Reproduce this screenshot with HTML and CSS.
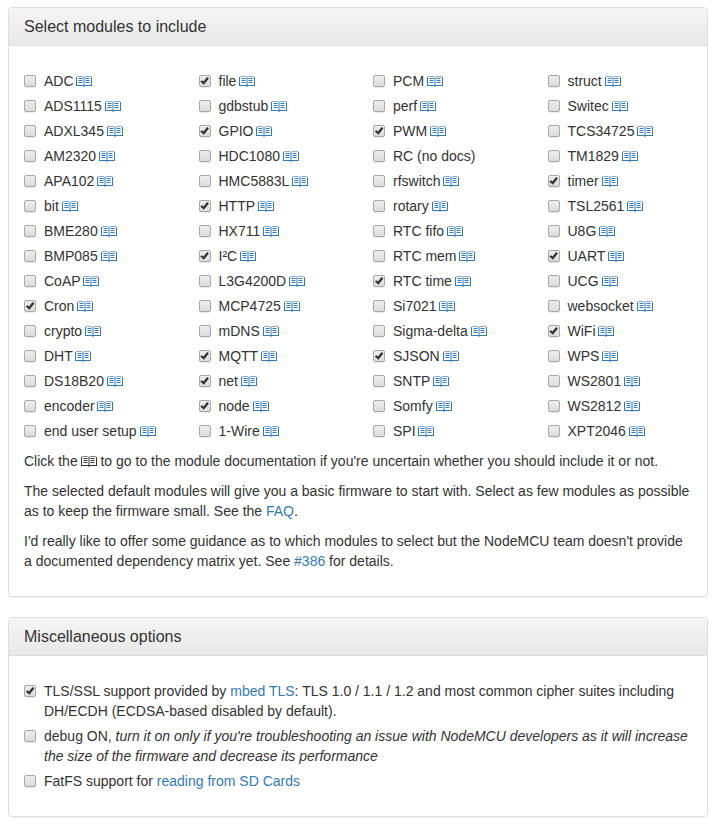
FILE: index.html
```html
<!DOCTYPE html>
<html lang="en">
<head>
<meta charset="utf-8">
<title>NodeMCU custom builds</title>
<link rel="stylesheet" href="styles.css">
</head>
<body>
<svg class="sprite" aria-hidden="true">
  <symbol id="book" viewBox="0 0 16 12">
    <g fill="currentColor">
      <path opacity=".6" d="M1 0H6.500L8 1L9.500 0H15V1H9.500L8 2L6.500 1H1Z"/>
      <path d="M0 1H1V9H7.500V1.500H8.500V9H15V1H16V10H9L8 11L7 10H0Z"/>
      <path d="M2.500 2H6.500V3H2.500ZM2.500 4H6.500V5H2.500ZM2.500 6H6.500V7H2.500ZM9.500 2H13.500V3H9.500ZM9.500 4H13.500V5H9.500ZM9.500 6H13.500V7H9.500Z"/>
    </g>
  </symbol>
</svg>
<section class="panel">
  <h3 class="panel-heading">Select modules to include</h3>
  <div class="panel-body">
    <div class="modules">
      <div class="column">
        <label class="option"><input type="checkbox">ADC <a href="#adc"><svg class="book"><use href="#book"/></svg></a></label>
        <label class="option"><input type="checkbox">ADS1115 <a href="#ads1115"><svg class="book"><use href="#book"/></svg></a></label>
        <label class="option"><input type="checkbox">ADXL345 <a href="#adxl345"><svg class="book"><use href="#book"/></svg></a></label>
        <label class="option"><input type="checkbox">AM2320 <a href="#am2320"><svg class="book"><use href="#book"/></svg></a></label>
        <label class="option"><input type="checkbox">APA102 <a href="#apa102"><svg class="book"><use href="#book"/></svg></a></label>
        <label class="option"><input type="checkbox">bit <a href="#bit"><svg class="book"><use href="#book"/></svg></a></label>
        <label class="option"><input type="checkbox">BME280 <a href="#bme280"><svg class="book"><use href="#book"/></svg></a></label>
        <label class="option"><input type="checkbox">BMP085 <a href="#bmp085"><svg class="book"><use href="#book"/></svg></a></label>
        <label class="option"><input type="checkbox">CoAP <a href="#coap"><svg class="book"><use href="#book"/></svg></a></label>
        <label class="option"><input type="checkbox" checked>Cron <a href="#cron"><svg class="book"><use href="#book"/></svg></a></label>
        <label class="option"><input type="checkbox">crypto <a href="#crypto"><svg class="book"><use href="#book"/></svg></a></label>
        <label class="option"><input type="checkbox">DHT <a href="#dht"><svg class="book"><use href="#book"/></svg></a></label>
        <label class="option"><input type="checkbox">DS18B20 <a href="#ds18b20"><svg class="book"><use href="#book"/></svg></a></label>
        <label class="option"><input type="checkbox">encoder <a href="#encoder"><svg class="book"><use href="#book"/></svg></a></label>
        <label class="option"><input type="checkbox">end user setup <a href="#enduser-setup"><svg class="book"><use href="#book"/></svg></a></label>
      </div>
      <div class="column">
        <label class="option"><input type="checkbox" checked>file <a href="#file"><svg class="book"><use href="#book"/></svg></a></label>
        <label class="option"><input type="checkbox">gdbstub <a href="#gdbstub"><svg class="book"><use href="#book"/></svg></a></label>
        <label class="option"><input type="checkbox" checked>GPIO <a href="#gpio"><svg class="book"><use href="#book"/></svg></a></label>
        <label class="option"><input type="checkbox">HDC1080 <a href="#hdc1080"><svg class="book"><use href="#book"/></svg></a></label>
        <label class="option"><input type="checkbox">HMC5883L <a href="#hmc5883l"><svg class="book"><use href="#book"/></svg></a></label>
        <label class="option"><input type="checkbox" checked>HTTP <a href="#http"><svg class="book"><use href="#book"/></svg></a></label>
        <label class="option"><input type="checkbox">HX711 <a href="#hx711"><svg class="book"><use href="#book"/></svg></a></label>
        <label class="option"><input type="checkbox" checked>I²C <a href="#i2c"><svg class="book"><use href="#book"/></svg></a></label>
        <label class="option"><input type="checkbox">L3G4200D <a href="#l3g4200d"><svg class="book"><use href="#book"/></svg></a></label>
        <label class="option"><input type="checkbox">MCP4725 <a href="#mcp4725"><svg class="book"><use href="#book"/></svg></a></label>
        <label class="option"><input type="checkbox">mDNS <a href="#mdns"><svg class="book"><use href="#book"/></svg></a></label>
        <label class="option"><input type="checkbox" checked>MQTT <a href="#mqtt"><svg class="book"><use href="#book"/></svg></a></label>
        <label class="option"><input type="checkbox" checked>net <a href="#net"><svg class="book"><use href="#book"/></svg></a></label>
        <label class="option"><input type="checkbox" checked>node <a href="#node"><svg class="book"><use href="#book"/></svg></a></label>
        <label class="option"><input type="checkbox">1-Wire <a href="#ow"><svg class="book"><use href="#book"/></svg></a></label>
      </div>
      <div class="column">
        <label class="option"><input type="checkbox">PCM <a href="#pcm"><svg class="book"><use href="#book"/></svg></a></label>
        <label class="option"><input type="checkbox">perf <a href="#perf"><svg class="book"><use href="#book"/></svg></a></label>
        <label class="option"><input type="checkbox" checked>PWM <a href="#pwm"><svg class="book"><use href="#book"/></svg></a></label>
        <label class="option"><input type="checkbox">RC (no docs)</label>
        <label class="option"><input type="checkbox">rfswitch <a href="#rfswitch"><svg class="book"><use href="#book"/></svg></a></label>
        <label class="option"><input type="checkbox">rotary <a href="#rotary"><svg class="book"><use href="#book"/></svg></a></label>
        <label class="option"><input type="checkbox">RTC fifo <a href="#rtcfifo"><svg class="book"><use href="#book"/></svg></a></label>
        <label class="option"><input type="checkbox">RTC mem <a href="#rtcmem"><svg class="book"><use href="#book"/></svg></a></label>
        <label class="option"><input type="checkbox" checked>RTC time <a href="#rtctime"><svg class="book"><use href="#book"/></svg></a></label>
        <label class="option"><input type="checkbox">Si7021 <a href="#si7021"><svg class="book"><use href="#book"/></svg></a></label>
        <label class="option"><input type="checkbox">Sigma-delta <a href="#sigma-delta"><svg class="book"><use href="#book"/></svg></a></label>
        <label class="option"><input type="checkbox" checked>SJSON <a href="#sjson"><svg class="book"><use href="#book"/></svg></a></label>
        <label class="option"><input type="checkbox">SNTP <a href="#sntp"><svg class="book"><use href="#book"/></svg></a></label>
        <label class="option"><input type="checkbox">Somfy <a href="#somfy"><svg class="book"><use href="#book"/></svg></a></label>
        <label class="option"><input type="checkbox">SPI <a href="#spi"><svg class="book"><use href="#book"/></svg></a></label>
      </div>
      <div class="column">
        <label class="option"><input type="checkbox">struct <a href="#struct"><svg class="book"><use href="#book"/></svg></a></label>
        <label class="option"><input type="checkbox">Switec <a href="#switec"><svg class="book"><use href="#book"/></svg></a></label>
        <label class="option"><input type="checkbox">TCS34725 <a href="#tcs34725"><svg class="book"><use href="#book"/></svg></a></label>
        <label class="option"><input type="checkbox">TM1829 <a href="#tm1829"><svg class="book"><use href="#book"/></svg></a></label>
        <label class="option"><input type="checkbox" checked>timer <a href="#tmr"><svg class="book"><use href="#book"/></svg></a></label>
        <label class="option"><input type="checkbox">TSL2561 <a href="#tsl2561"><svg class="book"><use href="#book"/></svg></a></label>
        <label class="option"><input type="checkbox">U8G <a href="#u8g"><svg class="book"><use href="#book"/></svg></a></label>
        <label class="option"><input type="checkbox" checked>UART <a href="#uart"><svg class="book"><use href="#book"/></svg></a></label>
        <label class="option"><input type="checkbox">UCG <a href="#ucg"><svg class="book"><use href="#book"/></svg></a></label>
        <label class="option"><input type="checkbox">websocket <a href="#websocket"><svg class="book"><use href="#book"/></svg></a></label>
        <label class="option"><input type="checkbox" checked>WiFi <a href="#wifi"><svg class="book"><use href="#book"/></svg></a></label>
        <label class="option"><input type="checkbox">WPS <a href="#wps"><svg class="book"><use href="#book"/></svg></a></label>
        <label class="option"><input type="checkbox">WS2801 <a href="#ws2801"><svg class="book"><use href="#book"/></svg></a></label>
        <label class="option"><input type="checkbox">WS2812 <a href="#ws2812"><svg class="book"><use href="#book"/></svg></a></label>
        <label class="option"><input type="checkbox">XPT2046 <a href="#xpt2046"><svg class="book"><use href="#book"/></svg></a></label>
      </div>
    </div>
    <p>Click the <svg class="book"><use href="#book"/></svg> to go to the module documentation if you're uncertain whether you should include it or not.</p>
    <p>The selected default modules will give you a basic firmware to start with. Select as few modules as possible as to keep the firmware small. See the <a href="#faq">FAQ</a>.</p>
    <p>I'd really like to offer some guidance as to which modules to select but the NodeMCU team doesn't provide a documented dependency matrix yet. See <a href="#386">#386</a> for details.</p>
  </div>
</section>
<section class="panel">
  <h3 class="panel-heading">Miscellaneous options</h3>
  <div class="panel-body">
    <div class="options">
      <label class="option"><input type="checkbox" checked>TLS/SSL support provided by <a href="#mbed-tls">mbed TLS</a>: TLS 1.0 / 1.1 / 1.2 and most common cipher suites including DH/ECDH (ECDSA-based disabled by default).</label>
      <label class="option"><input type="checkbox">debug ON, <em>turn it on only if you're troubleshooting an issue with NodeMCU developers as it will increase the size of the firmware and decrease its performance</em></label>
      <label class="option"><input type="checkbox">FatFS support for <a href="#sdcard">reading from SD Cards</a></label>
    </div>
  </div>
</section>
</body>
</html>
```
FILE: styles.css
```css
* {
  box-sizing: border-box;
}

body {
  margin: 7px 11px 0 8px;
  background: #fff;
  color: #333;
  font: 14px/20px "Liberation Sans", Arial, sans-serif;
}

a {
  color: #337ab7;
  text-decoration: none;
}

.sprite {
  display: none;
}

.panel {
  margin-bottom: 20px;
  border: 1px solid #ddd;
  border-radius: 4px;
  box-shadow: 0 1px 2px rgba(0, 0, 0, 0.05);
}

.panel-heading {
  margin: 0;
  padding: 10px 15px;
  border-bottom: 1px solid #ddd;
  border-radius: 3px 3px 0 0;
  background: linear-gradient(#f5f5f5, #e8e8e8);
  font-size: 16px;
  font-weight: 400;
  line-height: 17px;
}

.panel-body {
  padding: 15px;
}

.panel-body p {
  margin: 0 0 10px;
}

.modules {
  display: grid;
  grid-template-columns: repeat(4, 1fr);
  margin: 0 -15px;
}

.column,
.options {
  display: flex;
  flex-direction: column;
  gap: 5px;
  padding: 10px 0;
}

.column {
  padding: 10px 15px;
}

.option {
  display: block;
  padding-left: 20px;
}

.option input {
  appearance: none;
  float: left;
  width: 12px;
  height: 12px;
  margin: 4px 0 0 -20px;
  border: 1px solid #a9a9a9;
  border-radius: 2px;
  background: linear-gradient(#ededed, #dcdcdc);
  box-shadow: 0 1px 0 rgba(0, 0, 0, 0.08);
}

.option input:checked::before {
  content: "";
  display: block;
  width: 10px;
  height: 10px;
  background: #333;
  clip-path: polygon(8% 55%, 24% 42%, 40% 56%, 76% 10%, 94% 24%, 44% 88%);
}

.book {
  width: 16px;
  height: 12px;
  margin-left: -1px;
  vertical-align: -2px;
}
```
